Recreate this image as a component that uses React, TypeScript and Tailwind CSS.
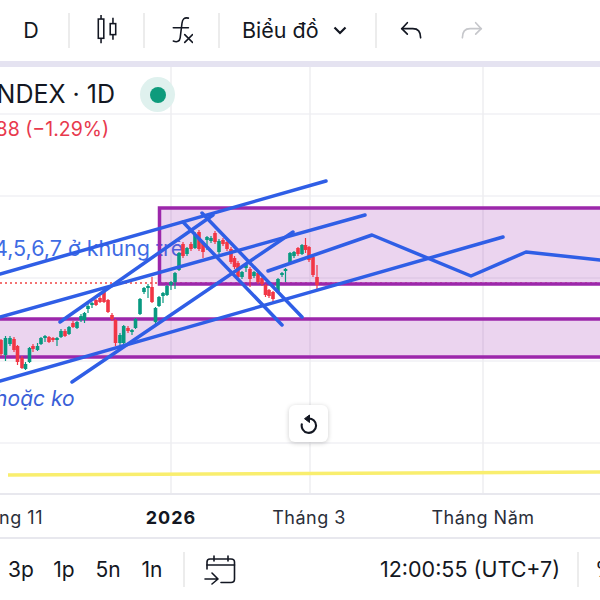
import { ReactNode } from "react"

// ---------------------------------------------------------------------------
// Chart data (page coordinates: the svg viewBox starts at y=67)
// ---------------------------------------------------------------------------

type Candle = [x: number, top: number, bodyTop: number, bodyBottom: number, bottom: number, up: boolean]

const CANDLES: Candle[] = [
  [1, 339, 340, 354, 356, false], [5.5, 336, 338, 355, 361, true], [10, 336, 338, 344, 346, true],
  [14, 337, 339, 350, 352, false], [17.5, 345, 346, 362, 365, false], [22, 356, 358, 368, 369, false],
  [25.5, 362, 364, 369, 370, true], [29.5, 347, 348, 362, 363, true], [33, 344, 346, 349, 352, false],
  [37.5, 343, 346, 350, 351, true], [41, 337, 338, 344, 345, true], [45, 335, 336, 338, 342, true],
  [49, 336, 337, 342, 343, false], [53, 337, 338, 340, 342, false], [57, 337, 338, 340, 346, true],
  [61, 329, 331, 337, 338, true], [65, 329, 331, 336, 337, false], [69, 326, 327, 334, 335, true],
  [73, 321, 323, 327, 328, false], [77, 321, 322, 328, 329, true], [81, 314, 316, 320, 322, true],
  [84.5, 312, 313, 320, 323, true], [88, 304, 306, 309, 313, true], [92, 302, 303, 305, 308, true],
  [96, 299, 300, 305, 306, false], [100, 296, 298, 302, 303, false], [104, 289, 291, 302, 303, false],
  [108, 299, 300, 312, 313, false], [112, 313, 315, 319, 321, false], [115.5, 319, 320, 343, 346, false],
  [120, 333, 335, 343, 347, true], [123.7, 325, 326, 343, 346, true], [128, 326, 328, 331, 333, false],
  [132, 329, 330, 332, 335, true], [135.5, 318, 319, 328, 329, true], [140, 298, 299, 314, 315, true],
  [144, 287, 288, 292, 294, true], [148, 284, 286, 288, 298, true], [152, 277, 287, 302, 303, false],
  [155.5, 307, 308, 322, 325, true], [159, 296, 297, 306, 307, true], [163, 292, 293, 296, 303, true],
  [167, 285, 286, 295, 296, true], [171, 281, 282, 285, 290, true], [175, 272, 273, 282, 289, true],
  [179, 252, 253, 270, 271, true], [183, 242, 244, 256, 258, false], [187, 247, 248, 254, 256, true],
  [191, 242, 244, 249, 251, false], [195, 232, 234, 248, 249, true], [199, 230, 232, 249, 251, false],
  [203, 241, 243, 252, 258, false], [207, 236, 237, 240, 250, true], [211, 236, 238, 241, 243, true],
  [215, 231, 233, 242, 244, false], [219, 239, 241, 252, 254, true], [223, 238, 240, 244, 246, false],
  [227, 240, 242, 249, 251, false], [231, 247, 249, 262, 264, false], [234.5, 256, 258, 267, 269, false],
  [238, 261, 263, 277, 279, false], [242, 271, 272, 277, 279, true], [246, 264, 265, 268, 272, true],
  [250, 267, 269, 279, 287, false], [254, 271, 272, 276, 278, true], [258, 271, 273, 282, 284, false],
  [262, 276, 278, 284, 286, false], [265.5, 284, 285, 295, 297, false], [269, 289, 290, 296, 298, false],
  [273, 291, 292, 299, 302, false], [278, 278, 279, 292, 293, true], [282, 272, 273, 275, 277, true],
  [285.5, 268, 269, 271, 282, true], [290, 252, 253, 264, 265, true], [294, 251, 252, 256, 258, true],
  [298, 247, 248, 254, 256, false], [302, 244, 245, 254, 255, true], [305.5, 238, 245, 250, 253, false],
  [309, 246, 247, 260, 262, false], [313, 256, 257, 275, 277, false], [317, 265, 277, 285, 289, false],
]

const LINES = [
  "M0 274 L326 181",
  "M0 317 L365 215",
  "M60 322 L213 215",
  "M183 222 L282 325",
  "M202 213 L302 317",
  "M72 382 L293 232",
  "M0 381 L503 237",
]

const H_GRID = [114, 196, 278, 361, 443]
const V_GRID = [171, 310, 483]

function ToolbarSep() {
  return <div className="w-[2px] h-[35px] bg-[#ececec] shrink-0" />
}

function Box({ w, children }: { w: string; children: ReactNode }) {
  return <div className={`flex items-center justify-center shrink-0 ${w}`}>{children}</div>
}

function Chart() {
  return (
    <svg viewBox="0 67 600 426" className="block w-[600px] h-[426px]">
      {H_GRID.map((y) => (
        <line key={y} x1="0" x2="600" y1={y} y2={y} stroke="#f1f1f4" strokeWidth="1.5" />
      ))}
      {V_GRID.map((x) => (
        <line key={x} x1={x} x2={x} y1="67" y2="493" stroke="#eeeef1" strokeWidth="1.5" />
      ))}

      <line x1="0" x2="600" y1="283" y2="283" stroke="#ef4444" strokeWidth="1.5" strokeDasharray="2 3" />
      <line x1="8" x2="600" y1="475" y2="472" stroke="#f9ee6e" strokeWidth="3.5" />

      <text x="-6" y="256" fontSize="21.5" fill="#3f6ce4" fontFamily="Inter, sans-serif">
        4,5,6,7 ở khung trê
      </text>
      <text x="-5" y="406" fontSize="21" fontStyle="italic" fill="#3a5fd8" fontFamily="Inter, sans-serif">
        hoặc ko
      </text>

      <rect x="159.5" y="208" width="460" height="76" fill="#9c27b0" fillOpacity="0.2" stroke="#9c27ab" strokeWidth="3.5" />
      <rect x="-10" y="319" width="620" height="38" fill="#9c27b0" fillOpacity="0.2" stroke="#9c27ab" strokeWidth="3.5" />

      {CANDLES.map(([x, top, bodyTop, bodyBottom, bottom, up]) => {
        const color = up ? "#089981" : "#f23645"
        return (
          <g key={x}>
            <line x1={x} x2={x} y1={top} y2={bottom} stroke={color} strokeWidth="1.2" />
            <rect x={x - 1.8} y={bodyTop} width="3.6" height={bodyBottom - bodyTop} fill={color} />
          </g>
        )
      })}

      <g stroke="#2f5ee6" strokeWidth="3.5" strokeLinecap="round" strokeLinejoin="round" fill="none">
        {LINES.map((d) => (
          <path key={d} d={d} />
        ))}
        <path d="M268 271 L372 235 L471 276 L526 252 L600 260" />
      </g>
    </svg>
  )
}

export default function App() {
  return (
    <div
      className="w-[600px] h-[600px] overflow-hidden flex flex-col bg-white text-[#131722]"
      style={{ fontFamily: "Inter, 'Noto Sans', sans-serif" }}
    >
      {/* Top toolbar */}
      <div className="h-[61px] flex items-center shrink-0">
        <Box w="w-[62px] mr-[6px]">
          <span className="text-[21.5px]">D</span>
        </Box>
        <ToolbarSep />
        <Box w="w-[73px]">
          <svg width="22" height="33" viewBox="0 0 24 34" fill="none" stroke="#131722" strokeWidth="1.7">
            <rect x="2.5" y="4.5" width="6" height="21" />
            <path d="M5.5 0V4.5M5.5 25.5V31" />
            <rect x="15.5" y="9.5" width="6" height="12" />
            <path d="M18.5 3V9.5M18.5 21.5V27" />
          </svg>
        </Box>
        <ToolbarSep />
        <Box w="w-[73px]">
          <svg width="22" height="29" viewBox="0 0 24 30" fill="none" stroke="#131722" strokeWidth="1.7" strokeLinecap="round">
            <path d="M19 1.5C14.5 0.5 12.5 2.5 12 7L10 23C9.5 27 6.5 28 2.5 26.5" />
            <path d="M2.5 12H19" />
            <path d="M15 19.5L23.5 28M23.5 19.5L15 28" />
          </svg>
        </Box>
        <ToolbarSep />
        <div className="w-[155px] shrink-0 flex items-center pl-[22px]">
          <span className="text-[21.5px] w-[91px] whitespace-nowrap">Biểu đồ</span>
          <svg width="14" height="9" viewBox="0 0 14 9" fill="none" stroke="#131722" strokeWidth="2.2">
            <path d="M1.5 1.5L7 7L12.5 1.5" />
          </svg>
        </div>
        <ToolbarSep />
        <Box w="w-[68px]">
          <svg width="22" height="19" viewBox="0 0 24 20" fill="none" stroke="#131722" strokeWidth="1.8" strokeLinecap="round">
            <path d="M8 1.5L2 8L8 14" />
            <path d="M2 8H14C19.5 8 22.5 12 22.5 18" />
          </svg>
        </Box>
        <Box w="w-[53px]">
          <svg width="22" height="19" viewBox="0 0 24 20" fill="none" stroke="#c6c7cb" strokeWidth="1.8" strokeLinecap="round">
            <path d="M16 1.5L22 8L16 14" />
            <path d="M22 8H10C4.5 8 1.5 12 1.5 18" />
          </svg>
        </Box>
      </div>
      <div className="h-[6px] bg-[#e5e3f1] shrink-0" />

      {/* Chart pane */}
      <div className="relative h-[426px] shrink-0">
        <Chart />

        <div className="absolute left-0 top-[10px] w-[115px] flex justify-end whitespace-nowrap text-[25px] leading-[34px]">
          VNINDEX · 1D
        </div>
        <div className="absolute left-0 top-[48px] w-[109px] flex justify-end whitespace-nowrap text-[19.5px] leading-[28px] text-[#e8394d]">
          −17.88 (−1.29%)
        </div>
        <div className="absolute left-[140px] top-[10px] w-[35px] h-[35px] rounded-full bg-[#dff1ee] flex items-center justify-center">
          <div className="w-[16px] h-[16px] rounded-full bg-[#0e9b7c]" />
        </div>

        <div className="absolute left-[289px] top-[338px] w-[39px] h-[37px] rounded-md bg-white shadow-[0_1px_5px_rgba(0,0,0,0.2)] flex items-center justify-center">
          <svg width="20" height="20" viewBox="0 0 20 20" fill="none" stroke="#131722" strokeWidth="2.1">
            <path d="M9 4.5A7.2 7.2 0 1 1 3 9.5" />
            <path d="M10.5 1V8.5L5.5 4.7Z" fill="#131722" strokeWidth="1" strokeLinejoin="round" />
          </svg>
        </div>
      </div>

      {/* Time axis */}
      <div className="h-[46px] shrink-0 border-y-2 border-[#e8e8ee] flex items-center pt-[2px] text-[18px] tracking-[0.5px] whitespace-nowrap text-[#2a2e39]">
        <div className="w-[43px] shrink-0 flex justify-end">Tháng 11</div>
        <div className="ml-[98px] w-[60px] shrink-0 text-center font-bold text-[#131722] tracking-[1px]">2026</div>
        <div className="ml-[68px] w-[80px] shrink-0 flex justify-center">Tháng 3</div>
        <div className="ml-[74px] w-[120px] shrink-0 flex justify-center">Tháng Năm</div>
      </div>

      {/* Bottom bar */}
      <div className="flex-1 flex items-center whitespace-nowrap text-[21px]">
        <Box w="w-[42px]">3p</Box>
        <Box w="w-[44px]">1p</Box>
        <Box w="w-[44px]">5n</Box>
        <Box w="w-[44px]">1n</Box>
        <div className="ml-[9px] mr-[19px]">
          <ToolbarSep />
        </div>
        <svg className="shrink-0" width="32" height="30" viewBox="0 0 32 30" fill="none" stroke="#131722" strokeWidth="1.6" strokeLinecap="round" strokeLinejoin="round">
          <path d="M3 14V7C3 5 4.5 4 6 4H27C29 4 30.5 5 30.5 7V24C30.5 26.5 29 27.5 27 27.5H17" />
          <path d="M10 1V6M24 1V6M3 10H30.5" />
          <path d="M1 24H13M8 18L14 24L8 29" />
        </svg>
        <div className="ml-[144px] text-[21.5px] w-[197px] shrink-0">12:00:55 (UTC+7)</div>
        <ToolbarSep />
        <div className="ml-[16px] text-[22px]">%</div>
      </div>
    </div>
  )
}
